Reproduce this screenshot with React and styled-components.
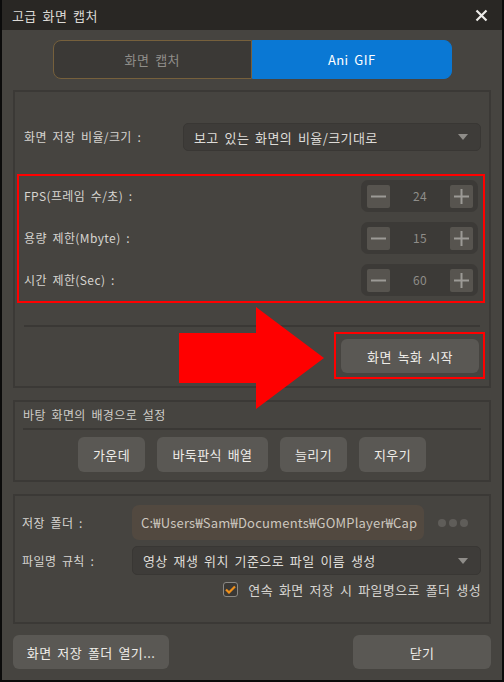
import React from "react";
import styled, { createGlobalStyle } from "styled-components";

const Global = createGlobalStyle`
  html, body { margin: 0; padding: 0; background: #000; }
  * { box-sizing: border-box; }
  body { font-family: "Noto Sans CJK KR", "Noto Sans", sans-serif; }
`;

const Window = styled.div`
  width: 504px;
  height: 682px;
  border: 2px solid #0b0b0b;
  border-top: 0;
  background: #464440;
  display: flex;
  flex-direction: column;
  overflow: hidden;
  letter-spacing: 0.4px;
  word-spacing: 2.5px;
`;

const TitleBar = styled.div`
  height: 30px;
  background: #292724;
  display: flex;
  align-items: center;
  padding: 0 14px 0 10px;
  color: #dcdad6;
  font-size: 13px;
  justify-content: space-between;
`;

const Body = styled.div`
  padding: 0 11px;
  display: flex;
  flex-direction: column;
`;

const Tabs = styled.div`
  align-self: center;
  width: 399px;
  height: 39px;
  margin-top: 10px;
  display: flex;
`;

const Tab = styled.div`
  flex: 1;
  display: flex;
  align-items: center;
  justify-content: center;
  font-size: 13px;
  line-height: 1;
  background: ${(p) => (p.$active ? "#0a78d4" : "#3b3936")};
  color: ${(p) => (p.$active ? "#ffffff" : "#8f8d89")};
  border: 1px solid ${(p) => (p.$active ? "#0a78d4" : "#76603c")};
  border-radius: ${(p) => (p.$left ? "8px 0 0 8px" : "0 8px 8px 0")};
`;

const Panel = styled.div`
  position: relative;
  margin-top: ${(p) => p.$mt || 12}px;
  border: 2px solid #3b3936;
  display: flex;
  flex-direction: column;
`;

const Row = styled.div`
  display: flex;
  align-items: center;
  height: ${(p) => p.$h || 28}px;
  margin-top: ${(p) => p.$mt || 0}px;
  padding: ${(p) => p.$pad || "0"};
`;

const Label = styled.div`
  font-size: 12px;
  color: #d6d4d0;
  line-height: 1;
  white-space: nowrap;
  width: ${(p) => (p.$w ? p.$w + "px" : "auto")};
  flex: none;
`;

const Select = styled.div`
  width: ${(p) => p.$w}px;
  height: ${(p) => p.$h || 28}px;
  margin-left: auto;
  background: #3e3c39;
  border: 1px solid #393734;
  border-radius: 5px;
  display: flex;
  align-items: center;
  justify-content: space-between;
  padding: 0 12px 0 10px;
  color: #dedcd8;
  font-size: 13px;
  line-height: 1;
`;

const Caret = styled.span`
  width: 0;
  height: 0;
  border-left: 5px solid transparent;
  border-right: 5px solid transparent;
  border-top: 6px solid #8f8d89;
`;

const RedBox = styled.div`
  border: 2px solid #ff0000;
  margin: ${(p) => p.$m};
  padding: ${(p) => p.$p};
  display: flex;
  flex-direction: column;
  gap: ${(p) => p.$gap || 0}px;
  align-self: ${(p) => p.$align || "stretch"};
`;

const StepRow = styled.div`
  display: flex;
  align-items: center;
  justify-content: space-between;
  height: 32px;
`;

const Stepper = styled.div`
  width: 117px;
  height: 32px;
  background: #3c3a37;
  border-radius: 7px;
  display: flex;
  align-items: center;
  justify-content: space-between;
  padding: 0 5px 0 6px;
`;

const StepBtn = styled.div`
  width: 23px;
  height: 23px;
  background: #57544f;
  border-radius: 2px;
  display: flex;
  align-items: center;
  justify-content: center;
`;

const StepValue = styled.div`
  font-size: 12px;
  color: #8f8d89;
  line-height: 1;
`;

const Divider = styled.div`
  height: 2px;
  background: #3a3835;
  margin: ${(p) => p.$m};
`;

const Button = styled.div`
  width: ${(p) => p.$w}px;
  height: ${(p) => p.$h || 34}px;
  background: #5a5854;
  border-radius: 6px;
  display: flex;
  align-items: center;
  justify-content: center;
  color: #eeece8;
  font-size: 13px;
  line-height: 1;
`;

const Arrow = styled.svg`
  position: absolute;
  left: 164px;
  top: 215px;
  z-index: 5;
`;

const SectionTitle = styled.div`
  font-size: 12px;
  color: #cfcdc9;
  line-height: 16px;
  height: 16px;
`;

const ButtonGroup = styled.div`
  display: flex;
  justify-content: center;
  gap: 12px;
  margin-top: 7px;
`;

const PathBox = styled.div`
  width: 292px;
  height: 35px;
  background: #524940;
  border-radius: 7px;
  display: flex;
  align-items: center;
  padding: 0 8px 0 9px;
  color: #cdc7bf;
  font-size: 13px;
  white-space: nowrap;
  overflow: hidden;
  line-height: 1;
  letter-spacing: 0.2px;
`;

const Dots = styled.div`
  display: flex;
  gap: 3px;
  margin-left: 14px;
`;

const Dot = styled.span`
  width: 8px;
  height: 8px;
  border-radius: 50%;
  background: #5f5d59;
`;

const CheckRow = styled.div`
  display: flex;
  align-items: center;
  justify-content: flex-end;
  gap: 10px;
  margin-top: 7px;
  padding-right: 8px;
  height: 15px;
  color: #d6d4d0;
  font-size: 13px;
  line-height: 1;
`;

const Check = styled.div`
  width: 15px;
  height: 15px;
  border: 1px solid #8a8884;
  border-radius: 3px;
  background: #3a3835;
  display: flex;
  align-items: center;
  justify-content: center;
`;

const Spacer = styled.div`
  height: ${(p) => p.$h}px;
`;

const Footer = styled.div`
  display: flex;
  justify-content: space-between;
  margin-top: 11px;
`;

const Minus = () => (
  <svg width="15" height="15" viewBox="0 0 15 15">
    <rect x="0" y="6.5" width="15" height="2" fill="#9c9a96" />
  </svg>
);
const Plus = () => (
  <svg width="15" height="15" viewBox="0 0 15 15">
    <rect x="0" y="6.5" width="15" height="2" fill="#9c9a96" />
    <rect x="6.5" y="0" width="2" height="15" fill="#9c9a96" />
  </svg>
);

const steps = [
  ["FPS(프레임 수/초) :", "24"],
  ["용량 제한(Mbyte) :", "15"],
  ["시간 제한(Sec) :", "60"],
];

export default function App() {
  return (
    <>
      <Global />
      <Window>
        <TitleBar>
          <span>고급 화면 캡처</span>
          <svg width="13" height="13" viewBox="0 0 13 13">
            <path d="M1.5 1.5 L11.5 11.5 M11.5 1.5 L1.5 11.5" stroke="#ecebe8" strokeWidth="2.2" />
          </svg>
        </TitleBar>
        <Body>
          <Tabs>
            <Tab $left>화면 캡처</Tab>
            <Tab $active>Ani GIF</Tab>
          </Tabs>

          <Panel $mt={11}>
            <Row $mt={31} $pad="0 8px 0 9px">
              <Label>화면 저장 비율/크기 :</Label>
              <Select $w={298}>
                <span>보고 있는 화면의 비율/크기대로</span>
                <Caret />
              </Select>
            </Row>
            <RedBox $m="23px 4px 0 2px" $p="4px 5px 5px 5px" $gap={10}>
              {steps.map(([l, v]) => (
                <StepRow key={l}>
                  <Label>{l}</Label>
                  <Stepper>
                    <StepBtn><Minus /></StepBtn>
                    <StepValue>{v}</StepValue>
                    <StepBtn><Plus /></StepBtn>
                  </Stepper>
                </StepRow>
              ))}
            </RedBox>
            <Divider $m="22px 9px 0 9px" />
            <RedBox $m="5px 4px 7px 0" $p="5px 4px 4px 5px" $align="flex-end">
              <Button $w={138}>화면 녹화 시작</Button>
            </RedBox>
            <Arrow width="146" height="103" viewBox="0 0 146 103">
              <polygon points="0,26 77,26 77,0 145,51 77,102 77,76 0,76" fill="#ff0000" />
            </Arrow>
          </Panel>

          <Panel style={{ padding: "5px 8px 8px 8px" }}>
            <SectionTitle>바탕 화면의 배경으로 설정</SectionTitle>
            <Divider $m="5px 0 0 0" />
            <ButtonGroup>
              <Button $w={67} $h={35}>가운데</Button>
              <Button $w={111} $h={35}>바둑판식 배열</Button>
              <Button $w={67} $h={35}>늘리기</Button>
              <Button $w={67} $h={35}>지우기</Button>
            </ButtonGroup>
          </Panel>

          <Panel>
            <Row $h={35} $mt={9} $pad="0 0 0 7px">
              <Label $w={110}>저장 폴더 :</Label>
              <PathBox>C:₩Users₩Sam₩Documents₩GOMPlayer₩Cap</PathBox>
              <Dots>
                <Dot />
                <Dot />
                <Dot />
              </Dots>
            </Row>
            <Row $h={29} $mt={6} $pad="0 8px 0 7px">
              <Label $w={110}>파일명 규칙 :</Label>
              <Select $w={349} $h={29}>
                <span>영상 재생 위치 기준으로 파일 이름 생성</span>
                <Caret />
              </Select>
            </Row>
            <CheckRow>
              <Check>
                <svg width="11" height="9" viewBox="0 0 11 9">
                  <path d="M1 4.5 L4 7.5 L10 1.5" stroke="#ee8f1a" strokeWidth="2.2" fill="none" />
                </svg>
              </Check>
              <span>연속 화면 저장 시 파일명으로 폴더 생성</span>
            </CheckRow>
            <Spacer $h={25} />
          </Panel>

          <Footer>
            <Button $w={156}>화면 저장 폴더 열기...</Button>
            <Button $w={138}>닫기</Button>
          </Footer>
        </Body>
      </Window>
    </>
  );
}
